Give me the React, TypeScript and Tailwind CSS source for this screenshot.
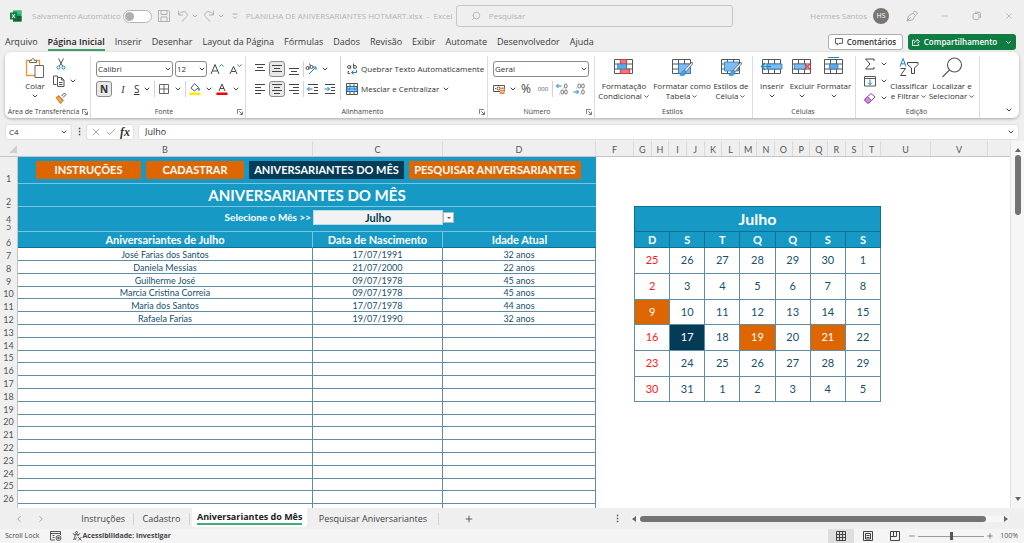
import { useState } from "react";
import type { ReactNode } from "react";
import { ChevronDown, ChevronLeft, ChevronRight, Minus, Plus, Search, X, Check } from "lucide-react";

const menus = [
  "Arquivo",
  "Página Inicial",
  "Inserir",
  "Desenhar",
  "Layout da Página",
  "Fórmulas",
  "Dados",
  "Revisão",
  "Exibir",
  "Automate",
  "Desenvolvedor",
  "Ajuda",
];

const months = [
  "Janeiro",
  "Fevereiro",
  "Março",
  "Abril",
  "Maio",
  "Junho",
  "Julho",
  "Agosto",
  "Setembro",
  "Outubro",
  "Novembro",
  "Dezembro",
];

const people = [
  { name: "José Farias dos Santos", date: "17/07/1991", age: "32 anos" },
  { name: "Daniela Messias", date: "21/07/2000", age: "22 anos" },
  { name: "Guilherme José", date: "09/07/1978", age: "45 anos" },
  { name: "Marcia Cristina Correia", date: "09/07/1978", age: "45 anos" },
  { name: "Maria dos Santos", date: "17/07/1978", age: "44 anos" },
  { name: "Rafaela Farias", date: "19/07/1990", age: "32 anos" },
];

const weeks = [
  [25, 26, 27, 28, 29, 30, 1],
  [2, 3, 4, 5, 6, 7, 8],
  [9, 10, 11, 12, 13, 14, 15],
  [16, 17, 18, 19, 20, 21, 22],
  [23, 24, 25, 26, 27, 28, 29],
  [30, 31, 1, 2, 3, 4, 5],
];

// week-day keys, so that only days of the current month are painted
const birthdays = ["2-9", "3-19", "3-21"];
const today = "3-17";

const sheetFont = "font-['Lato',sans-serif]";

function Caret({ className = "size-2 text-[#444]" }: { className?: string }) {
  return <ChevronDown aria-hidden className={`shrink-0 ${className}`} strokeWidth={3} />;
}

function Divider({ className = "h-4" }: { className?: string }) {
  return <span className={`w-px shrink-0 bg-[#d4d4d4] ${className}`} />;
}

function Launcher() {
  return (
    <svg viewBox="0 0 8 8" className="size-[6px]" fill="none" stroke="#444">
      <path d="M.5 6.5v-6h6M3 3l4 4M7.2 3.5v3.8H3.5" />
    </svg>
  );
}

function Group({
  label,
  width,
  launcher,
  children,
}: {
  label: string;
  width: string;
  launcher?: boolean;
  children: ReactNode;
}) {
  return (
    <section aria-label={label} className={`flex shrink-0 flex-col pt-1 ${width}`}>
      <div className="flex flex-1 flex-col border-r border-[#dcdcdc]">
        <div className="flex h-[50px] items-start">{children}</div>
        <div className="flex h-3 items-center pr-[2px]">
          <span className="flex-1 whitespace-nowrap text-center text-[7px] leading-3 text-[#444]">{label}</span>
          {launcher ? (
            <button aria-label={`Configurações de ${label}`}>
              <Launcher />
            </button>
          ) : null}
        </div>
      </div>
    </section>
  );
}

function Tool({
  label,
  active,
  children,
}: {
  label: string;
  active?: boolean;
  children: ReactNode;
}) {
  return (
    <button
      aria-label={label}
      className={[
        "flex h-4 min-w-4 shrink-0 items-center justify-center gap-1 rounded-[3px]",
        active ? "border border-[#8a8a8a] bg-[#e8e8e8]" : "",
      ].join(" ")}
    >
      {children}
    </button>
  );
}

function BigTool({
  icon,
  lines,
  width,
  caretBelow,
}: {
  icon: ReactNode;
  lines: string[];
  width: string;
  caretBelow?: boolean;
}) {
  return (
    <button className={`flex shrink-0 flex-col items-center pt-px text-[8px] leading-[10px] text-[#333] ${width}`}>
      <span className="flex h-6 items-start justify-center">{icon}</span>
      {lines.map((line, i) => (
        <span key={line} className="flex items-center gap-px whitespace-nowrap">
          {line}
          {!caretBelow && i === lines.length - 1 ? <Caret className="size-[7px] text-[#444]" /> : null}
        </span>
      ))}
      {caretBelow ? <Caret className="mt-px size-2 text-[#444]" /> : null}
    </button>
  );
}

function Picker({ label, value, width }: { label: string; value: string; width: string }) {
  return (
    <div className={`relative flex h-4 shrink-0 ${width}`}>
      <select
        aria-label={label}
        className="h-4 w-full appearance-none rounded-[3px] border border-[#8a8a8a] bg-white pl-px text-[8px] leading-[14px] text-[#333]"
      >
        <option>{value}</option>
      </select>
      <Caret className="pointer-events-none absolute right-px top-1 size-2 text-[#444]" />
    </div>
  );
}

function Lines({ rows }: { rows: number[][] }) {
  return (
    <svg viewBox="0 0 12 12" className="size-3" stroke="#444" strokeWidth="1">
      {rows.map(([x1, x2, y]) => (
        <path key={y} d={`M${x1} ${y}H${x2}`} />
      ))}
    </svg>
  );
}

const alignIcons = {
  top: [[1, 11, 1.5], [3, 9, 4.5], [1, 11, 7.5]],
  middle: [[1, 11, 2.5], [3, 9, 5.5], [1, 11, 8.5]],
  bottom: [[1, 11, 5.5], [3, 9, 8.5], [1, 11, 11.5]],
  left: [[1, 11, 1.5], [1, 7, 4.5], [1, 11, 7.5], [1, 7, 10.5]],
  center: [[1, 11, 1.5], [3, 9, 4.5], [1, 11, 7.5], [3, 9, 10.5]],
  right: [[1, 11, 1.5], [5, 11, 4.5], [1, 11, 7.5], [5, 11, 10.5]],
};

function Indent({ flip }: { flip?: boolean }) {
  return (
    <svg viewBox="0 0 12 12" className="size-3" fill="none">
      <path d="M1 1.5h10M7 4.5h4M7 7.5h4M1 10.5h10" stroke="#444" />
      <path d={flip ? "M.5 6h5M3.5 4l2 2-2 2" : "M.5 6h5M2.5 4l-2 2 2 2"} stroke="#1a84cf" />
    </svg>
  );
}

function SheetGrid({ children }: { children?: ReactNode }) {
  return (
    <svg viewBox="0 0 22 20" className="h-5 w-[22px]" fill="none">
      <path d="M1.5 2.5h18v14h-18zM7.5 2.5v14M13.5 2.5v14M1.5 7h18M1.5 12h18" stroke="#555" />
      {children}
    </svg>
  );
}

function Brush() {
  return (
    <g>
      <path d="M21 5l-7.500 8 1.500 1.700L21.500 7z" fill="#fff" stroke="#555" strokeWidth=".8" />
      <path d="M13.300 13.200c-2.200 0-2 2.800-4.500 5 3 1.300 6.300 0 6.300-3.200z" fill="#4a9fe0" stroke="#2b7cc0" strokeWidth=".6" />
    </g>
  );
}

function TitleBar() {
  const [autoSave, setAutoSave] = useState(false);
  return (
    <header className="flex h-8 items-center px-[10px] text-[8px] text-[#b4b4b4]">
      <svg viewBox="0 0 12 12" className="size-3 shrink-0">
        <path d="M3 .5h8.500v11H3z" fill="#21a366" />
        <path d="M7 .5h4.500v3.500H7z" fill="#33c481" />
        <path d="M3 6h8.500v5.500H3z" fill="#185c37" />
        <path d="M0 2.500h7v7H0z" fill="#107c41" />
        <path d="M2 4l3 4M5 4L2 8" stroke="#fff" strokeWidth="1" />
      </svg>
      <label htmlFor="autosave" className="ml-[10px] whitespace-nowrap">
        Salvamento Automático
      </label>
      <input
        id="autosave"
        type="checkbox"
        checked={autoSave}
        onChange={(e) => setAutoSave(e.target.checked)}
        className="ml-[2px] h-[13px] w-[29px] shrink-0 appearance-none rounded-full border border-[#b4b4b4] bg-white before:mt-px before:ml-px before:block before:size-[9px] before:rounded-full before:bg-[#b0b0b0] checked:before:ml-[17px]"
      />
      <button aria-label="Salvar" className="ml-[6px]">
        <svg viewBox="0 0 12 12" className="size-3" fill="none" stroke="#b0b0b0">
          <path d="M.5.500h10l1 1v10H.5zM3 .5v4h6v-4M3 11.500v-4.500h6v4.500" />
        </svg>
      </button>
      <button aria-label="Desfazer" className="ml-[7px] flex items-center gap-[2px]">
        <svg viewBox="0 0 12 12" className="size-3" fill="none" stroke="#b0b0b0">
          <path d="M1.500.5v4.500H6M1.700 4.800C4 1.500 7.500.8 9.300 2.800s.8 3.700-1 5.300L5 11.300" />
        </svg>
        <Caret className="size-2 text-[#b0b0b0]" />
      </button>
      <button aria-label="Refazer" className="ml-1 flex items-center gap-[2px]">
        <svg viewBox="0 0 12 12" className="size-3" fill="none" stroke="#b0b0b0">
          <path d="M10.500.5v4.500H6M10.300 4.800C8 1.500 4.500.8 2.700 2.800s-.8 3.700 1 5.300L7 11.300" />
        </svg>
        <Caret className="size-2 text-[#b0b0b0]" />
      </button>
      <button aria-label="Personalizar" className="ml-[6px]">
        <svg viewBox="0 0 8 8" className="size-2" fill="none" stroke="#b0b0b0">
          <path d="M1.500 2h5M2 4.500l2 2 2-2" />
        </svg>
      </button>
      <h1 className="ml-[7px] w-[210px] whitespace-nowrap">
        PLANILHA DE ANIVERSARIANTES HOTMART.xlsx &nbsp;-&nbsp; Excel
      </h1>
      <label className="flex h-[22px] w-[277px] items-center gap-2 rounded-[3px] border border-[#c6c6c6] pl-[14px]">
        <Search aria-hidden className="size-[10px] -scale-x-100" />
        <input
          aria-label="Pesquisar"
          placeholder="Pesquisar"
          className="min-w-0 flex-1 bg-transparent text-[8px] outline-none placeholder:text-[#b4b4b4]"
        />
      </label>
      <div className="ml-auto flex items-center">
        <span className="whitespace-nowrap">Hermes Santos</span>
        <span className="ml-[6px] flex size-4 items-center justify-center rounded-full bg-[#7a7572] text-[7px] text-white">
          HS
        </span>
        <button aria-label="Tinta" className="ml-[17px]">
          <svg viewBox="0 0 12 12" className="size-3" fill="none" stroke="#b0b0b0">
            <path d="M1 11l1.500-5L7 3l2.500 2.500-3 4.500zM7.500 2.500l1-1.500 3 2-1.500 2M1 11l3.500-3.500" />
          </svg>
        </button>
        <button aria-label="Minimizar" className="ml-[22px]">
          <Minus className="size-[10px]" />
        </button>
        <button aria-label="Restaurar" className="ml-[22px]">
          <svg viewBox="0 0 10 10" className="size-[10px]" fill="none" stroke="#b0b0b0">
            <rect x="1" y="2.500" width="6" height="6" rx="1.500" />
            <path d="M3 1.200h4a1.500 1.500 0 011.500 1.500V7" />
          </svg>
        </button>
        <button aria-label="Fechar" className="ml-[22px]">
          <X className="size-[10px]" />
        </button>
      </div>
    </header>
  );
}

function MenuBar() {
  return (
    <nav className="flex h-5 items-end justify-between pb-px pl-[5px] pr-2">
      <div className="flex items-center gap-[10px] text-[9px] text-[#3a3a3a]">
        {menus.map((menu) => (
          <button
            key={menu}
            className={[
              "h-4 whitespace-nowrap border-b-2 leading-[14px]",
              menu === "Página Inicial" ? "border-[#3f9c6b] font-semibold text-[#222]" : "border-transparent",
            ].join(" ")}
          >
            {menu}
          </button>
        ))}
      </div>
      <div className="flex gap-[5px] pb-px text-[8px] font-semibold">
        <button className="flex h-4 w-[75px] items-center justify-center gap-1 rounded-[3px] border border-[#adadad] bg-white text-[#333]">
          <svg viewBox="0 0 9 9" className="size-2 shrink-0" fill="none" stroke="#444">
            <path d="M.5.500h8v5.500H4.500l-2 2V6h-2z" />
          </svg>
          Comentários
        </button>
        <button className="flex h-4 w-[108px] items-center justify-center gap-1 rounded-[3px] bg-[#107c41] text-white">
          <svg viewBox="0 0 9 9" className="size-2 shrink-0" fill="none" stroke="#fff">
            <path d="M3 2.500H.5v6h7V6.500M2.500 6c.3-2 1.500-2.800 3.300-2.800V1.200L8.500 4 5.800 6" />
          </svg>
          Compartilhamento
          <Caret className="ml-1 size-[7px] text-white" />
        </button>
      </div>
    </nav>
  );
}

function Ribbon() {
  return (
    <div className="mx-[5px] flex h-[66px] rounded-md bg-white shadow-[0_1px_3px_rgba(0,0,0,0.3)]">
      <Group label="Área de Transferência" width="w-[86px]" launcher>
        <BigTool
          width="ml-3 w-9"
          lines={["Colar"]}
          caretBelow
          icon={
            <svg viewBox="0 0 20 22" className="h-[22px] w-5" fill="none">
              <path d="M14.500 8V3.500h-13v15H10" stroke="#e8963c" strokeWidth="1.300" />
              <path d="M4.500 5.500v-2h2C6.500 1 9.500 1 9.500 3.500h2v2z" fill="#fff" stroke="#666" />
              <path d="M10 8.500h8.500v12H10z" fill="#fff" stroke="#666" />
            </svg>
          }
        />
        <div className="flex h-[50px] flex-col items-start justify-between">
          <Tool label="Recortar">
            <svg viewBox="0 0 12 12" className="size-3" fill="none">
              <path d="M3.500.5l4 7.500M8.500.5l-4 7.500" stroke="#555" />
              <circle cx="3.500" cy="9.500" r="1.500" stroke="#1a84cf" />
              <circle cx="8.500" cy="9.500" r="1.500" stroke="#1a84cf" />
            </svg>
          </Tool>
          <Tool label="Copiar">
            <svg viewBox="0 0 12 12" className="size-3" fill="none" stroke="#555">
              <path d="M4.500 2.500V1h-4v8.500h3M4.500 2.500h4l2.500 2.500v6.500H4.500zM8.500 2.500V5H11M6 7.500h3.500M6 9.500h3.500" />
            </svg>
            <Caret />
          </Tool>
          <Tool label="Pincel de Formatação">
            <svg viewBox="0 0 12 12" className="size-3" fill="none">
              <path d="M6.500 4L9.500 1l1.500 1.500L8 5.500M3.500 3.500l5 5" stroke="#555" />
              <path d="M1 5.500l3-1.500 4 4.500-2.500 3z" fill="#f3a35c" stroke="#d9730d" />
            </svg>
          </Tool>
        </div>
      </Group>

      <Group label="Fonte" width="w-[155px]" launcher>
        <div className="flex flex-col gap-1 pl-[5px] pt-[5px]">
          <div className="flex items-center gap-[2px]">
            <Picker label="Fonte" value="Calibri" width="w-[77px]" />
            <Picker label="Tamanho" value="12" width="w-8" />
            <Tool label="Aumentar Fonte">
              <svg viewBox="0 0 14 12" className="h-3 w-[14px]" fill="none">
                <path d="M1 11L5 1.500 9 11M2.500 8h5" stroke="#444" />
                <path d="M9.500 3.500L11.500 1.500l2 2" stroke="#1a84cf" />
              </svg>
            </Tool>
            <Tool label="Diminuir Fonte">
              <svg viewBox="0 0 14 12" className="h-3 w-[14px]" fill="none">
                <path d="M2 11L5.500 3.500 9 11M3.500 8.500h4" stroke="#444" />
                <path d="M9.500 1.500l2 2 2-2" stroke="#1a84cf" />
              </svg>
            </Tool>
          </div>
          <div className="flex items-center gap-[3px] text-[10px] text-[#333]">
            <Tool label="Negrito" active>
              <b>N</b>
            </Tool>
            <Tool label="Itálico">
              <i className="font-['Liberation_Serif',serif]">I</i>
            </Tool>
            <Tool label="Sublinhado">
              <u>S</u>
              <Caret />
            </Tool>
            <Divider />
            <Tool label="Bordas">
              <svg viewBox="0 0 12 12" className="size-3" fill="none" stroke="#666">
                <path d="M1.500 1.500h9v9h-9zM6 1.500v9M1.500 6h9" />
              </svg>
              <Caret />
            </Tool>
            <Divider />
            <Tool label="Cor de Preenchimento">
              <svg viewBox="0 0 12 12" className="size-3" fill="none">
                <path d="M5.500.5l4 4-4 3.500L2 5z" stroke="#555" />
                <path d="M9.500 4.500c1.500 1 1.500 3 .5 3s-1-1.500-.5-3" fill="#1a84cf" stroke="#1a84cf" strokeWidth=".5" />
                <path d="M.5 9.500h11V12H.5z" fill="#ffeb00" />
              </svg>
              <Caret />
            </Tool>
            <Tool label="Cor da Fonte">
              <svg viewBox="0 0 12 12" className="size-3" fill="none">
                <path d="M3 8l3-7 3 7M4 5.500h4" stroke="#444" />
                <path d="M.5 9.500h11V12H.5z" fill="#f00000" />
              </svg>
              <Caret />
            </Tool>
          </div>
        </div>
      </Group>

      <Group label="Alinhamento" width="w-[242px]" launcher>
        <div className="flex flex-col gap-1 pl-[6px] pt-[5px]">
          <div className="flex items-center gap-px">
            <Tool label="Alinhar em Cima">
              <Lines rows={alignIcons.top} />
            </Tool>
            <Tool label="Alinhar no Meio" active>
              <Lines rows={alignIcons.middle} />
            </Tool>
            <Tool label="Alinhar Embaixo">
              <Lines rows={alignIcons.bottom} />
            </Tool>
            <Divider />
            <Tool label="Orientação">
              <svg viewBox="0 0 12 12" className="size-3" fill="none">
                <path d="M4 11l7-7M11 7V4H8" stroke="#1a84cf" />
                <circle cx="2.500" cy="5" r="1.500" stroke="#555" />
                <circle cx="6.500" cy="4" r="1.500" stroke="#555" />
                <path d="M4 3.500v3M4.500.5l1 2.500" stroke="#555" />
              </svg>
              <Caret />
            </Tool>
          </div>
          <div className="flex items-center gap-px">
            <Tool label="Alinhar à Esquerda">
              <Lines rows={alignIcons.left} />
            </Tool>
            <Tool label="Centralizar" active>
              <Lines rows={alignIcons.center} />
            </Tool>
            <Tool label="Alinhar à Direita">
              <Lines rows={alignIcons.right} />
            </Tool>
            <Divider />
            <Tool label="Diminuir Recuo">
              <Indent />
            </Tool>
            <Tool label="Aumentar Recuo">
              <Indent flip />
            </Tool>
          </div>
        </div>
        <Divider className="ml-[2px] h-11" />
        <div className="flex flex-col items-start gap-1 pl-[5px] pt-[5px] text-[8px] text-[#333]">
          <button className="flex h-4 items-center gap-[3px] whitespace-nowrap">
            <svg viewBox="0 0 12 12" className="size-3" fill="none">
              <circle cx="3" cy="4" r="1.500" stroke="#555" />
              <path d="M4.700 2.500v3M7.500.5v5M3 8.500h-1v2h2" stroke="#555" />
              <circle cx="9" cy="4" r="1.500" stroke="#555" />
              <path d="M10.500 7v2.500H5.500M7.500 7.500l-2 2 2 2" stroke="#1a84cf" />
            </svg>
            Quebrar Texto Automaticamente
          </button>
          <button className="flex h-4 items-center gap-[3px] whitespace-nowrap">
            <svg viewBox="0 0 12 12" className="size-3" fill="none">
              <path d="M.5.500h11v11H.5z" fill="#fff" stroke="#555" />
              <path d="M1 3.500h10v5H1z" fill="#9fcdf2" stroke="#1a6fb5" />
              <path d="M4 .5v3M8 .5v3M4 8.500v3M8 8.500v3" stroke="#555" />
              <path d="M2.500 6h7M4 4.800L2.500 6 4 7.200M8 4.800L9.500 6 8 7.200" stroke="#1a6fb5" strokeWidth=".8" />
            </svg>
            Mesclar e Centralizar
            <Caret />
          </button>
        </div>
      </Group>

      <Group label="Número" width="w-[107px]" launcher>
        <div className="flex flex-col gap-1 pl-[5px] pt-[5px]">
          <Picker label="Formato de Número" value="Geral" width="w-24" />
          <div className="flex items-center gap-px">
            <Tool label="Formato de Contabilização">
              <svg viewBox="0 0 12 12" className="size-3" fill="none">
                <path d="M.5 2.500h11v6H.5zM2 5.500h1" stroke="#555" />
                <circle cx="5.500" cy="5.500" r="1.500" stroke="#555" />
                <path d="M7 4.500h4.500V11H7z" fill="#f08a3c" />
                <path d="M7 6.500h4.500M7 8.700h4.500" stroke="#fff" strokeWidth=".6" />
              </svg>
              <Caret />
            </Tool>
            <Tool label="Estilo de Porcentagem">
              <span className="text-[12px] leading-4 text-[#444]">%</span>
            </Tool>
            <Tool label="Separador de Milhares">
              <span className="text-[6px] text-[#555]">000</span>
            </Tool>
            <Divider />
            <Tool label="Aumentar Casas Decimais">
              <svg viewBox="0 0 12 12" className="size-3" fill="none">
                <path d="M.5 3h5M2.500 1l-2 2 2 2" stroke="#1a84cf" />
                <g stroke="#555" strokeWidth=".8">
                  <rect x="8.500" y="1" width="2.500" height="4" rx="1.200" />
                  <rect x="5" y="7" width="2.500" height="4" rx="1.200" />
                  <rect x="8.700" y="7" width="2.500" height="4" rx="1.200" />
                  <path d="M7 5h.6M3.300 11h.6" />
                </g>
              </svg>
            </Tool>
            <Tool label="Diminuir Casas Decimais">
              <svg viewBox="0 0 12 12" className="size-3" fill="none">
                <path d="M.5 9h5M3.500 7l2 2-2 2" stroke="#1a84cf" />
                <g stroke="#555" strokeWidth=".8">
                  <rect x="5" y="1" width="2.500" height="4" rx="1.200" />
                  <rect x="8.700" y="1" width="2.500" height="4" rx="1.200" />
                  <rect x="8.700" y="7" width="2.500" height="4" rx="1.200" />
                  <path d="M3.300 5h.6M7 11h.6" />
                </g>
              </svg>
            </Tool>
          </div>
        </div>
      </Group>

      <Group label="Estilos" width="w-[158px]">
        <BigTool
          width="ml-px w-[56px]"
          lines={["Formatação", "Condicional"]}
          icon={
            <SheetGrid>
              <path d="M7.500 2.500h6V7h-6zM7.500 12h9v4.500h-9z" fill="#f4737d" stroke="#d63c48" />
              <path d="M4.500 7h9v5h-9z" fill="#5aa9e6" stroke="#2b7cc0" strokeWidth=".6" />
            </SheetGrid>
          }
        />
        <BigTool
          width="w-[60px]"
          lines={["Formatar como", "Tabela"]}
          icon={
            <SheetGrid>
              <path d="M7.500 7h12v9.500h-12z" fill="#7dbcf0" stroke="#2b7cc0" strokeWidth=".8" />
              <Brush />
            </SheetGrid>
          }
        />
        <BigTool
          width="w-[38px]"
          lines={["Estilos de", "Célula"]}
          icon={
            <SheetGrid>
              <path d="M4.500 5h14v9h-14z" fill="#7dbcf0" stroke="#2b7cc0" strokeWidth=".8" />
              <Brush />
            </SheetGrid>
          }
        />
      </Group>

      <Group label="Células" width="w-[103px]">
        <BigTool
          width="ml-1 w-[30px]"
          lines={["Inserir"]}
          caretBelow
          icon={
            <SheetGrid>
              <path d="M6 7h15v5H6z" fill="#7dbcf0" stroke="#2b7cc0" strokeWidth=".8" />
              <path d="M.5 9.500H10M4 6L.5 9.500 4 13" stroke="#1a84cf" strokeWidth="1.300" />
            </SheetGrid>
          }
        />
        <BigTool
          width="w-[30px]"
          lines={["Excluir"]}
          caretBelow
          icon={
            <SheetGrid>
              <path d="M3.500 7h11v5h-11z" fill="#7dbcf0" stroke="#2b7cc0" strokeWidth=".8" />
              <path d="M13 6l7 7M20 6l-7 7" stroke="#e0343f" strokeWidth="1.200" />
            </SheetGrid>
          }
        />
        <BigTool
          width="w-[34px]"
          lines={["Formatar"]}
          caretBelow
          icon={
            <SheetGrid>
              <path d="M6.500 7h8.500v5H6.500z" fill="#5aa9e6" stroke="#2b7cc0" strokeWidth=".8" />
              <path d="M5 .5h11" stroke="#1a84cf" />
            </SheetGrid>
          }
        />
      </Group>

      <Group label="Edição" width="w-[124px]">
        <div className="flex h-[50px] flex-col justify-between pl-2">
          <Tool label="AutoSoma">
            <svg viewBox="0 0 12 12" className="size-3" fill="none" stroke="#444">
              <path d="M10 3V1H1.500l4.500 5-4.500 5H10V9" />
            </svg>
            <Caret />
          </Tool>
          <Tool label="Preencher">
            <svg viewBox="0 0 12 12" className="size-3" fill="none">
              <path d="M.5 1.500h11v9.500H.5zM.5 3.500h11" stroke="#555" />
              <path d="M6 4.500v5M4 7.700l2 2 2-2" stroke="#1a84cf" />
            </svg>
            <Caret />
          </Tool>
          <Tool label="Limpar">
            <svg viewBox="0 0 12 12" className="size-3" fill="none">
              <path d="M1 7l6-5.500L11 5l-6 6H3.500L1 8.500z" fill="#fff" stroke="#a03fb5" />
              <path d="M1 7l2.500-2.300L7.500 8.500 5 11H3.500L1 8.500z" fill="#cf8bdc" stroke="#a03fb5" />
            </svg>
            <Caret />
          </Tool>
        </div>
        <BigTool
          width="w-[42px]"
          lines={["Classificar", "e Filtrar"]}
          icon={
            <svg viewBox="0 0 22 20" className="h-5 w-[22px]" fill="none">
              <path d="M2 9.500L5 1.500l3 8M3 6.800h4" stroke="#1a84cf" />
              <path d="M2.500 11.500h5l-5 7h5.500" stroke="#444" />
              <path d="M9.500 5.500h10.500v2L16.500 11v5.500h-3V11L9.500 7.500z" stroke="#444" />
            </svg>
          }
        />
        <BigTool
          width="w-11"
          lines={["Localizar e", "Selecionar"]}
          icon={
            <svg viewBox="0 0 22 22" className="h-[22px] w-[22px]" fill="none" stroke="#555" strokeWidth="1.100">
              <circle cx="13.500" cy="8" r="7" />
              <path d="M8.500 13L1.500 20" />
            </svg>
          }
        />
      </Group>
      <button aria-label="Opções da faixa" className="mt-auto mb-1 ml-auto mr-[6px]">
        <Caret className="size-2 text-[#444]" />
      </button>
    </div>
  );
}

function FormulaBar({ month }: { month: string }) {
  return (
    <div className="mx-[5px] mt-[6px] flex h-4 items-stretch gap-1 text-[9px] text-[#333]">
      <div className="flex w-[67px] items-center rounded-[3px] border border-[#e0e0e0] bg-white pr-[3px]">
        <input
          aria-label="Caixa de nome"
          defaultValue="C4"
          className="min-w-0 flex-1 pl-[3px] text-[8px] outline-none"
        />
        <button aria-label="Nomes">
          <Caret />
        </button>
      </div>
      <span className="flex w-[6px] items-center justify-center font-bold">⋮</span>
      <div className="flex w-12 items-center justify-between rounded-[3px] border border-[#e0e0e0] bg-white px-[3px]">
        <button aria-label="Cancelar">
          <X className="size-3 text-[#aaa]" />
        </button>
        <button aria-label="Inserir">
          <Check className="size-3 text-[#aaa]" />
        </button>
        <button aria-label="Inserir Função" className="font-['Liberation_Serif',serif] text-[12px] font-bold italic leading-3">
          fx
        </button>
      </div>
      <div className="flex flex-1 items-center rounded-[3px] border border-[#e0e0e0] bg-white pr-[3px]">
        <input
          aria-label="Barra de fórmulas"
          readOnly
          value={month}
          className="min-w-0 flex-1 pl-[6px] outline-none"
        />
        <button aria-label="Expandir barra">
          <Caret />
        </button>
      </div>
    </div>
  );
}

function RowNumber({ children, className = "h-3" }: { children: ReactNode; className?: string }) {
  return (
    <th scope="row" className="border-r border-[#c4c4c4] bg-[#efefef] p-0 align-bottom font-normal text-[#555]">
      <div className={`flex items-end justify-center overflow-hidden text-[9px] leading-[11px] ${className}`}>
        {children}
      </div>
    </th>
  );
}

function Birthdays({ month, onMonth }: { month: string; onMonth: (m: string) => void }) {
  const navButton = "h-[18px] shrink-0 whitespace-nowrap text-[11px] font-bold leading-[18px] text-white";
  const head = "border-b border-[#0b6f92] p-0 text-[11px] font-bold leading-[15px] text-white";
  const cell = "border-r border-b border-[#5f8da3] p-0";
  return (
    <table className={`w-[596px] shrink-0 table-fixed border-separate border-spacing-0 self-start text-center ${sheetFont}`}>
      <colgroup>
        <col className="w-[18px]" />
        <col className="w-[295px]" />
        <col className="w-[130px]" />
        <col className="w-[153px]" />
      </colgroup>
      <thead className="text-[9px] text-[#555]">
        <tr className="h-4">
          <td className="border-b border-[#c4c4c4] p-0">
            <svg viewBox="0 0 9 9" className="ml-auto mr-px size-2">
              <path d="M9 0v9H0z" fill="#d0d0d0" />
            </svg>
          </td>
          {["B", "C", "D"].map((c) => (
            <th
              key={c}
              scope="col"
              className="border-r border-b border-[#c4c4c4] border-r-[#dadada] p-0 pt-[3px] font-normal leading-3"
            >
              {c}
            </th>
          ))}
        </tr>
      </thead>
      <tbody>
        <tr>
          <RowNumber className="h-[27px]">1</RowNumber>
          <td colSpan={3} className="border-b border-[#7cc4de] bg-[#1799c5] p-0">
            <div className="flex gap-[5px] pl-[18px]">
              <button className={`w-[105px] bg-[#dd6600] ${navButton}`}>INSTRUÇÕES</button>
              <button className={`w-[98px] bg-[#dd6600] ${navButton}`}>CADASTRAR</button>
              <button className={`w-[155px] bg-[#043c57] ${navButton}`}>ANIVERSARIANTES DO MÊS</button>
              <button className={`w-[172px] bg-[#dd6600] ${navButton}`}>PESQUISAR ANIVERSARIANTES</button>
            </div>
          </td>
        </tr>
        <tr>
          <RowNumber className="h-[23px]">2</RowNumber>
          <td colSpan={3} className="border-b border-[#7cc4de] bg-[#1799c5] p-0 text-[15px] font-bold leading-5 text-white">
            ANIVERSARIANTES DO MÊS
          </td>
        </tr>
        <tr>
          <RowNumber className="h-[3px]">3</RowNumber>
          <td colSpan={3} className="bg-[#1799c5] p-0" />
        </tr>
        <tr className="bg-[#1799c5] text-[10px] font-bold">
          <RowNumber className="h-[15px]">4</RowNumber>
          <td className="p-0 pr-[2px] text-right text-white">
            <label htmlFor="month">Selecione o Mês &gt;&gt;</label>
          </td>
          <td className="p-0">
            <select
              id="month"
              value={month}
              onChange={(e) => onMonth(e.target.value)}
              className="block h-[15px] w-full appearance-none border border-[#b9dbe8] bg-[#f2f2f2] text-center text-[11px] leading-3 text-[#043c57]"
            >
              {months.map((m) => (
                <option key={m}>{m}</option>
              ))}
            </select>
          </td>
          <td className="p-0 text-left">
            <label
              htmlFor="month"
              className="flex size-[11px] items-center justify-center border border-[#b5b5b5] bg-white"
            >
              <svg viewBox="0 0 4 2" className="h-[2px] w-1">
                <path d="M0 0h4L2 2z" fill="#555" />
              </svg>
            </label>
          </td>
        </tr>
        <tr>
          <RowNumber className="h-[7px]">5</RowNumber>
          <td colSpan={3} className="border-b border-[#7cc4de] bg-[#1799c5] p-0" />
        </tr>
        <tr className="bg-[#1799c5]">
          <RowNumber className="h-4">6</RowNumber>
          <th scope="col" className={`border-r border-r-[#7cc4de] ${head}`}>
            Aniversariantes de {month}
          </th>
          <th scope="col" className={`border-r border-r-[#7cc4de] ${head}`}>
            Data de Nascimento
          </th>
          <th scope="col" className={head}>
            Idade Atual
          </th>
        </tr>
        {Array.from({ length: 22 }, (_, i) => (
          <tr key={i} className="bg-white text-[9px] leading-[11px] text-[#17506b]">
            <RowNumber className={i % 5 === 3 ? "h-3" : "h-[13px]"}>{i + 7}</RowNumber>
            <td className={cell}>{people[i]?.name}</td>
            <td className={cell}>{people[i]?.date}</td>
            <td className={cell}>{people[i]?.age}</td>
          </tr>
        ))}
      </tbody>
    </table>
  );
}

function Calendar({ month }: { month: string }) {
  return (
    <table className="mt-[49px] ml-[38px] w-[247px] table-fixed border-collapse text-center text-[11px] text-[#17506b]">
      <thead className="bg-[#1799c5] text-white">
        <tr className="h-[25px]">
          <th colSpan={7} className="border border-[#0b6f92] p-0 text-[16px] leading-5">
            {month}
          </th>
        </tr>
        <tr className="h-4">
          {["D", "S", "T", "Q", "Q", "S", "S"].map((d, i) => (
            <th key={i} scope="col" className="border border-[#0b6f92] p-0 leading-[15px]">
              {d}
            </th>
          ))}
        </tr>
      </thead>
      <tbody>
        {weeks.map((week, w) => (
          <tr key={w} className={w % 3 === 2 ? "h-[25px]" : "h-[26px]"}>
            {week.map((day, i) => {
              const key = `${w}-${day}`;
              const tone =
                key === today
                  ? "bg-[#043c57] text-white"
                  : birthdays.includes(key)
                    ? "bg-[#dd6600] text-white"
                    : i === 0
                      ? "text-[#ff1a1a]"
                      : "";
              return (
                <td key={i} className={`border border-[#5f8da3] p-0 ${tone}`}>
                  {day}
                </td>
              );
            })}
          </tr>
        ))}
      </tbody>
    </table>
  );
}

function FreeColumns({ month }: { month: string }) {
  const letter = "border-r border-[#dadada] pt-[3px]";
  return (
    <div className={`min-w-0 flex-1 bg-white ${sheetFont}`}>
      <div className="flex h-4 border-b border-[#c4c4c4] bg-[#efefef] text-center text-[9px] leading-3 text-[#555]">
        <span className={`w-[38px] ${letter}`}>F</span>
        <div className="grid w-[247px] grid-cols-14">
          {"GHIJKLMNOPQRST".split("").map((c) => (
            <span key={c} className={letter}>
              {c}
            </span>
          ))}
        </div>
        <span className={`w-[50px] ${letter}`}>U</span>
        <span className={`w-[57px] ${letter}`}>V</span>
      </div>
      <Calendar month={month} />
    </div>
  );
}

function Arrow({ d, label }: { d: string; label: string }) {
  return (
    <button aria-label={label}>
      <svg viewBox="0 0 6 6" className="size-[6px]">
        <path d={d} fill="#666" />
      </svg>
    </button>
  );
}

function SheetTabs() {
  const tab = "flex h-full items-center whitespace-nowrap border-r border-[#d4d4d4]";
  return (
    <div className="flex h-[21px] shrink-0 items-center bg-[#efefef] text-[9px] text-[#444]">
      <div className="flex w-[70px] gap-3 pl-[14px] text-[#999]">
        <button aria-label="Planilha anterior">
          <ChevronLeft className="size-[10px]" />
        </button>
        <button aria-label="Próxima planilha">
          <ChevronRight className="size-[10px]" />
        </button>
      </div>
      <div className="flex h-3">
        <button className={`w-16 justify-end pr-2 ${tab}`}>Instruções</button>
        <button className={`w-14 justify-center ${tab}`}>Cadastro</button>
      </div>
      <button className="mb-[2px] ml-[2px] flex h-[19px] items-center rounded-b-[3px] bg-white px-[5px] font-bold text-[#222]">
        <span className="whitespace-nowrap border-b-2 border-[#3fae76] leading-3">Aniversariantes do Mês</span>
      </button>
      <div className="flex h-3">
        <button className={`w-[132px] justify-center ${tab}`}>Pesquisar Aniversariantes</button>
      </div>
      <button aria-label="Nova planilha" className="ml-[25px]">
        <Plus className="size-[10px]" />
      </button>
      <span className="ml-auto w-4 text-center font-bold">⋮</span>
      <div className="ml-[6px] mr-[15px] flex w-[378px] items-center gap-[3px] rounded-full bg-[#f6f6f6]">
        <Arrow label="Rolar para a esquerda" d="M5 0v6L1 3z" />
        <span className="h-[6px] w-[346px] rounded-full bg-[#737373]" />
        <span className="ml-auto flex">
          <Arrow label="Rolar para a direita" d="M1 0v6l4-3z" />
        </span>
      </div>
    </div>
  );
}

function StatusBar() {
  return (
    <footer className="flex h-[14px] shrink-0 items-center bg-[#f4f4f4] pl-[5px] pr-[6px] text-[7px] text-[#444]">
      <span>Scroll Lock</span>
      <svg viewBox="0 0 12 10" className="ml-[10px] h-[10px] w-3" fill="none" stroke="#444" strokeWidth=".9">
        <path d="M5 9H.5V.5h10V4M.5 2.500h10M2.500 4.500h2M2.500 6.500h2" />
        <circle cx="8.500" cy="7" r="2.500" />
        <circle cx="8.500" cy="7" r=".8" fill="#444" />
      </svg>
      <button className="ml-[10px] flex items-center gap-px font-bold">
        <svg viewBox="0 0 10 10" className="size-[10px]" fill="none" stroke="#444" strokeWidth=".9">
          <circle cx="4.500" cy="1.500" r="1" />
          <path d="M.8 2.500l2.200 1.200v2L1.500 9M8.200 2.500L6 3.700v1.500M3 3.700h3M6 6l3.500 3.500M9.500 6L6 9.500M3 9l1.500-2.500" />
        </svg>
        Acessibilidade: investigar
      </button>
      <div className="ml-auto flex h-full items-center text-[#555]">
        <button aria-label="Normal" className="flex h-full w-[26px] items-center justify-center bg-[#dedede]">
          <svg viewBox="0 0 10 10" className="size-[10px]" fill="none" stroke="#444">
            <path d="M.5.500h9v9h-9zM3.500.5v9M6.500.5v9M.5 3.500h9M.5 6.500h9" />
          </svg>
        </button>
        <button aria-label="Layout da página" className="flex w-[27px] justify-center">
          <svg viewBox="0 0 10 10" className="size-[10px]" fill="none" stroke="#444">
            <path d="M.5.500h9v9h-9zM2.500 2.500h5v5.500h-5zM3.500 4.500h3M3.500 6.500h3" />
          </svg>
        </button>
        <button aria-label="Quebra de página" className="flex w-[27px] justify-center">
          <svg viewBox="0 0 10 10" className="size-[10px]" fill="none" stroke="#444">
            <path d="M.5.500h9v9h-9zM3.500.5v5M6.500.5v5M.5 5.500h6" />
          </svg>
        </button>
        <button aria-label="Diminuir zoom">
          <Minus className="size-2" />
        </button>
        <input
          type="range"
          aria-label="Zoom"
          defaultValue={50}
          className="mx-[2px] h-2 w-[66px] appearance-none bg-transparent [&::-webkit-slider-runnable-track]:h-px [&::-webkit-slider-runnable-track]:bg-[#999] [&::-webkit-slider-thumb]:-mt-1 [&::-webkit-slider-thumb]:h-2 [&::-webkit-slider-thumb]:w-[3px] [&::-webkit-slider-thumb]:appearance-none [&::-webkit-slider-thumb]:bg-[#555]"
        />
        <button aria-label="Aumentar zoom">
          <Plus className="size-2" />
        </button>
        <span className="ml-[6px]">100%</span>
      </div>
    </footer>
  );
}

export default function App() {
  const [month, setMonth] = useState("Julho");

  return (
    <div className="flex h-screen flex-col overflow-hidden bg-[#efefef] font-['Open_Sans',sans-serif]">
      <div className="shrink-0 pb-px">
        <TitleBar />
        <MenuBar />
        <Ribbon />
        <FormulaBar month={month} />
      </div>
      <main className="flex min-h-0 flex-1 overflow-hidden">
        <Birthdays month={month} onMonth={setMonth} />
        <FreeColumns month={month} />
        <div className="flex w-[14px] shrink-0 flex-col items-center border-l border-[#e4e4e4] bg-[#f6f6f6] pt-[6px]">
          <Arrow label="Rolar para cima" d="M0 5h6L3 1z" />
          <span className="mt-[2px] h-[60px] w-[6px] rounded-full bg-[#737373]" />
          <span className="mt-auto">
            <Arrow label="Rolar para baixo" d="M0 1h6L3 5z" />
          </span>
        </div>
      </main>
      <SheetTabs />
      <StatusBar />
    </div>
  );
}
